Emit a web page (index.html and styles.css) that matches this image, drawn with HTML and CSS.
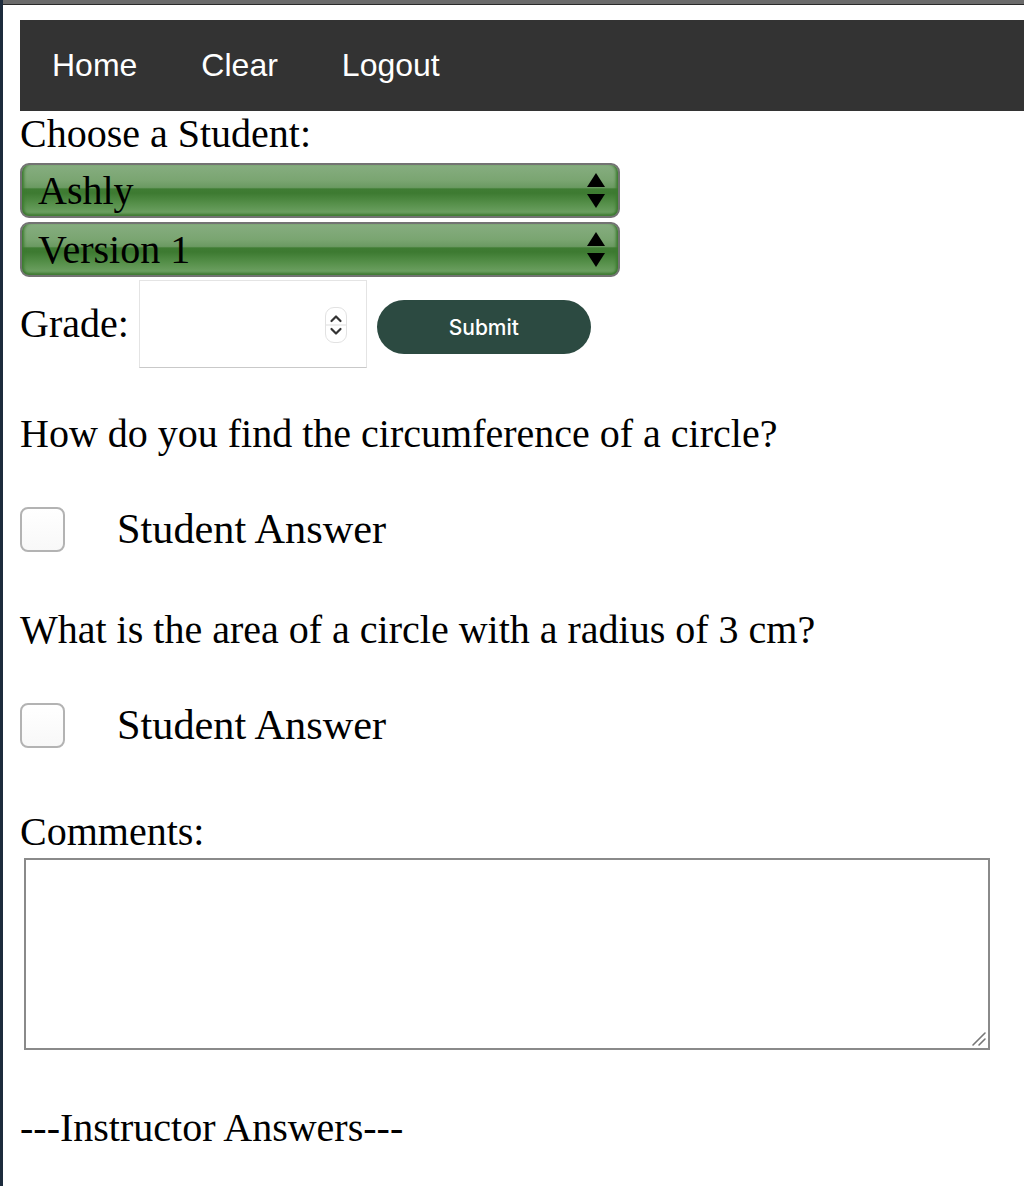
FILE: index.html
```html
<!DOCTYPE html>
<html lang="en">
<head>
<meta charset="utf-8">
<title>Grade Student</title>
<link rel="stylesheet" href="styles.css">
</head>
<body>
<div class="window">
  <div class="chrome"></div>
  <div class="content">
    <nav class="nav">
      <a class="nav-link" href="#">Home</a>
      <a class="nav-link" href="#">Clear</a>
      <a class="nav-link" href="#">Logout</a>
    </nav>
    <div class="label">Choose a Student:</div>
    <div class="select-wrap first">
      <select class="select"><option>Ashly</option></select>
      <svg class="arrows" width="18" height="35" viewBox="0 0 18 35"><polygon points="9,0 18,14 0,14" fill="#000"/><polygon points="0,21 18,21 9,35" fill="#000"/></svg>
    </div>
    <div class="select-wrap second">
      <select class="select"><option>Version 1</option></select>
      <svg class="arrows" width="18" height="35" viewBox="0 0 18 35"><polygon points="9,0 18,14 0,14" fill="#000"/><polygon points="0,21 18,21 9,35" fill="#000"/></svg>
    </div>
    <div class="grade-row">
      <span class="grade-label">Grade:</span>
      <div class="number-wrap">
        <input class="number" type="text" value="">
        <span class="spinner">
          <svg width="22" height="36" viewBox="0 0 22 36"><path d="M6.5 14 L11 9.5 L15.5 14" fill="none" stroke="#333" stroke-width="2.2" stroke-linecap="round" stroke-linejoin="round"/><line x1="1" y1="18" x2="21" y2="18" stroke="#ddd" stroke-width="1"/><path d="M6.5 22 L11 26.5 L15.5 22" fill="none" stroke="#333" stroke-width="2.2" stroke-linecap="round" stroke-linejoin="round"/></svg>
        </span>
      </div>
      <button class="submit" type="button">Submit</button>
    </div>
    <div class="question q1">How do you find the circumference of a circle?</div>
    <label class="answer a1"><input class="check" type="checkbox"><span class="answer-text">Student Answer</span></label>
    <div class="question q2">What is the area of a circle with a radius of 3 cm?</div>
    <label class="answer a2"><input class="check" type="checkbox"><span class="answer-text">Student Answer</span></label>
    <div class="label comments">Comments:</div>
    <div class="comment-wrap">
      <textarea class="comment-box"></textarea>
      <svg class="grip" width="16" height="16" viewBox="0 0 16 16"><line x1="2" y1="14" x2="14" y2="2" stroke="#777" stroke-width="1.6" stroke-linecap="round"/><line x1="8" y1="14" x2="14" y2="8" stroke="#777" stroke-width="1.6" stroke-linecap="round"/></svg>
    </div>
    <div class="label instructor">---Instructor Answers---</div>
  </div>
</div>
</body>
</html>
```
FILE: styles.css
```css
html, body {
  margin: 0;
  padding: 0;
  background: #fff;
}
.window {
  border-left: 3px solid #1c2b3c;
  min-height: 1186px;
  box-sizing: border-box;
  overflow: hidden;
  font-family: "Liberation Serif", "Times New Roman", serif;
  color: #000;
}
.chrome {
  height: 4px;
  background: #6b6b6b;
  border-bottom: 1px solid #2a2a2a;
}
.content {
  padding: 15px 0 0 17px;
}
.nav {
  display: flex;
  align-items: center;
  height: 91px;
  background: #333;
}
.nav-link {
  font-family: "Liberation Sans", Arial, sans-serif;
  font-size: 32px;
  color: #fff;
  text-decoration: none;
  padding: 0 32px;
  line-height: 40px;
  margin-top: -2px;
}
.label {
  font-size: 40px;
  line-height: 46px;
}
.select-wrap {
  position: relative;
  width: 600px;
  height: 55px;
}
.select-wrap.first { margin-top: 6px; }
.select-wrap.second { margin-top: 4px; }
.select {
  -webkit-appearance: none;
  appearance: none;
  width: 100%;
  height: 100%;
  box-sizing: border-box;
  border: 2px solid #737373;
  border-radius: 9px;
  padding: 0 0 0 16px;
  font-family: "Liberation Serif", "Times New Roman", serif;
  font-size: 40px;
  color: #000;
  background: linear-gradient(to bottom, #86ad80 0%, #7aa571 30%, #6b9a62 44%, #3f7c33 47%, #3d7a31 55%, #558f49 75%, #6a9e5f 92%, #5a9150 100%);
  box-shadow: inset 4px 0 3px -2px #3b7a2e, inset -4px 0 3px -2px #3b7a2e, inset 0 -3px 2px -1px #447f38;
  outline: none;
}
.arrows {
  position: absolute;
  right: 15px;
  top: 10px;
  pointer-events: none;
}
.grade-row {
  display: flex;
  align-items: center;
  margin-top: 3px;
  height: 88px;
}
.grade-label {
  font-size: 40px;
  line-height: 46px;
}
.number-wrap {
  position: relative;
  margin-left: 10px;
  width: 228px;
  height: 88px;
}
.number {
  width: 100%;
  height: 100%;
  box-sizing: border-box;
  border: 1px solid #e4e4e4;
  border-bottom-color: #c9c9c9;
  background: #fff;
  font-size: 30px;
  outline: none;
  padding: 0 10px;
}
.spinner {
  position: absolute;
  left: 186px;
  top: 27px;
  width: 22px;
  height: 36px;
  box-sizing: border-box;
  border: 1px solid #e2e2e2;
  border-radius: 9px;
  background: #fff;
  overflow: hidden;
}
.spinner svg {
  display: block;
  margin: -1px 0 0 -1px;
}
.submit {
  margin-left: 10px;
  margin-top: 6px;
  width: 214px;
  height: 54px;
  border: none;
  border-radius: 27px;
  background: #2c4a41;
  color: #fff;
  font-family: Inter, "Liberation Sans", Arial, sans-serif;
  font-weight: 500;
  font-size: 21px;
  padding: 0;
}
.question {
  font-size: 40px;
  line-height: 46px;
}
.q1 { margin-top: 43px; }
.q2 { margin-top: 53.5px; }
.answer {
  display: flex;
  align-items: center;
  height: 48px;
}
.a1 { margin-top: 48px; }
.a2 { margin-top: 48.5px; }
.check {
  -webkit-appearance: none;
  appearance: none;
  margin: 0;
  width: 45px;
  height: 45px;
  box-sizing: border-box;
  border: 2px solid #b3b3b3;
  border-radius: 8px;
  background: linear-gradient(#ffffff, #f8f8f8);
}
.answer-text {
  margin-left: 52px;
  font-size: 42.3px;
  line-height: 48px;
}
.comments { margin-top: 59.5px; }
.comment-wrap {
  position: relative;
  margin: 3.5px 0 0 4px;
  width: 966px;
  height: 192px;
}
.comment-box {
  display: block;
  width: 100%;
  height: 100%;
  box-sizing: border-box;
  border: 2px solid #8a8a8a;
  outline: none;
  resize: none;
}
.grip {
  position: absolute;
  right: 3px;
  bottom: 3px;
  pointer-events: none;
}
.instructor { margin-top: 54.5px; }
```
